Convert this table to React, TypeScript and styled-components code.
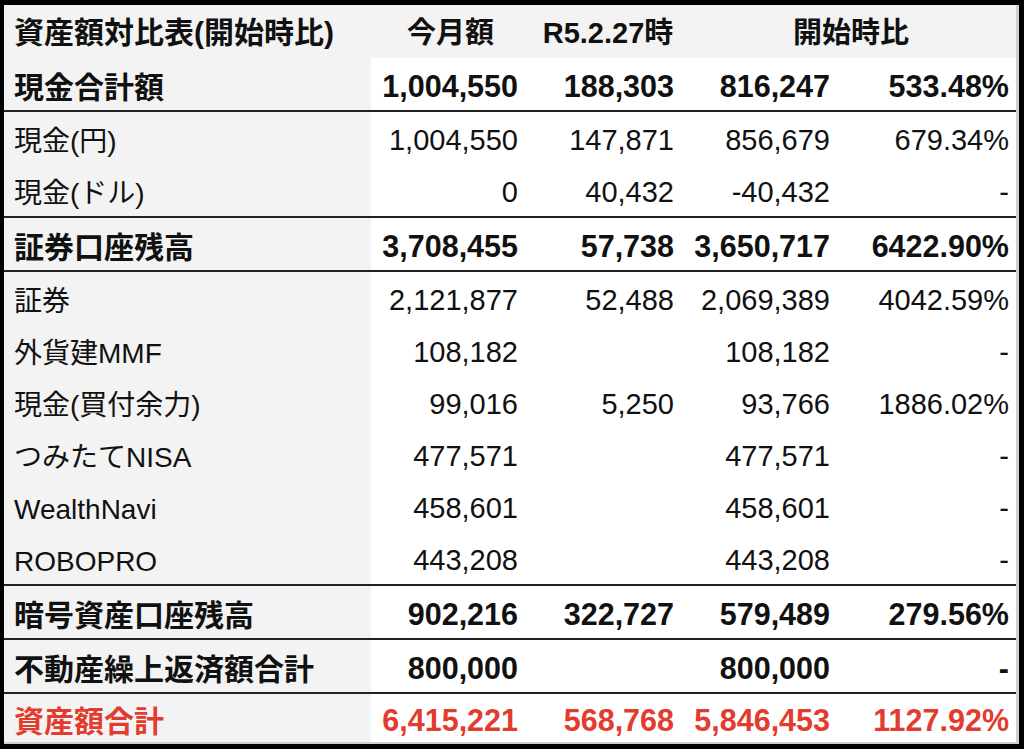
import React from 'react';
import styled, { createGlobalStyle } from 'styled-components';

type Row = {
  label: string;
  values: [string, string, string, string];
  bold?: boolean;
  group?: boolean;
  red?: boolean;
};

const rows: Row[] = [
  { label: '現金合計額', values: ['1,004,550', '188,303', '816,247', '533.48%'], bold: true, group: true },
  { label: '現金(円)', values: ['1,004,550', '147,871', '856,679', '679.34%'] },
  { label: '現金(ドル)', values: ['0', '40,432', '-40,432', '-'], group: true },
  { label: '証券口座残高', values: ['3,708,455', '57,738', '3,650,717', '6422.90%'], bold: true, group: true },
  { label: '証券', values: ['2,121,877', '52,488', '2,069,389', '4042.59%'] },
  { label: '外貨建MMF', values: ['108,182', '', '108,182', '-'] },
  { label: '現金(買付余力)', values: ['99,016', '5,250', '93,766', '1886.02%'] },
  { label: 'つみたてNISA', values: ['477,571', '', '477,571', '-'] },
  { label: 'WealthNavi', values: ['458,601', '', '458,601', '-'] },
  { label: 'ROBOPRO', values: ['443,208', '', '443,208', '-'], group: true },
  { label: '暗号資産口座残高', values: ['902,216', '322,727', '579,489', '279.56%'], bold: true, group: true },
  { label: '不動産繰上返済額合計', values: ['800,000', '', '800,000', '-'], bold: true, group: true },
  { label: '資産額合計', values: ['6,415,221', '568,768', '5,846,453', '1127.92%'], bold: true, red: true },
];

export default function App() {
  return (
    <>
      <GlobalStyle />
      <Frame>
        <Table>
          <HeaderRow>
            <HeaderTitle>資産額対比表(開始時比)</HeaderTitle>
            <HeaderCell>今月額</HeaderCell>
            <HeaderCell>R5.2.27時</HeaderCell>
            <HeaderCell $span={2}>開始時比</HeaderCell>
          </HeaderRow>
          {rows.map((row, i) => (
            <DataRow key={row.label} $group={row.group} $last={i === rows.length - 1}>
              <Label $bold={row.bold} $red={row.red}>
                {row.label}
              </Label>
              {row.values.map((v, j) => (
                <Value key={j} $bold={row.bold} $red={row.red} $pad={j === 3 ? 7 : 12}>
                  {v}
                </Value>
              ))}
            </DataRow>
          ))}
        </Table>
      </Frame>
    </>
  );
}

const GlobalStyle = createGlobalStyle`
  html, body {
    margin: 0;
    background: #000;
  }
  body {
    font-family: "Liberation Sans", "Noto Sans CJK JP", sans-serif;
    color: #111;
  }
`;

const Frame = styled('div')`
  width: 1024px;
  height: 749px;
  box-sizing: border-box;
  padding: 5px 5px 6px 4px;
  background: #000;
`;

const Table = styled('div')`
  display: flex;
  flex-direction: column;
  background: #fff;
  border-right: 3px solid #cfcfcf;
  border-bottom: 2px solid #cfcfcf;
`;

const columns = '367px 159px 156px 156px 1fr';

const HeaderRow = styled('div')`
  display: grid;
  grid-template-columns: ${columns};
  grid-template-rows: 53px;
  background: #f3f3f3;
  font-weight: 700;
  font-size: 29px;
  line-height: 1.2;
`;

const HeaderTitle = styled('div')`
  display: flex;
  align-items: center;
  padding: 3px 0 0 10px;
  font-size: 30px;
  white-space: nowrap;
`;

const HeaderCell = styled('div')<{ $span?: number }>`
  display: flex;
  align-items: center;
  justify-content: center;
  padding-top: 4px;
  grid-column: span ${({ $span }) => $span ?? 1};
`;

const DataRow = styled('div')<{ $group?: boolean; $last?: boolean }>`
  display: grid;
  grid-template-columns: ${columns};
  grid-template-rows: ${({ $last }) => ($last ? 48 : 52)}px;
  border-bottom: ${({ $group }) => ($group ? '2px solid #222' : 'none')};
  line-height: 1.2;
`;

const Label = styled('div')<{ $bold?: boolean; $red?: boolean }>`
  display: flex;
  align-items: center;
  padding: 7px 0 0 10px;
  background: #f3f3f3;
  white-space: nowrap;
  overflow: hidden;
  font-size: ${({ $bold }) => ($bold ? 30 : 28)}px;
  font-weight: ${({ $bold }) => ($bold ? 700 : 400)};
  color: ${({ $red }) => ($red ? '#e23c2e' : '#111')};
`;

const Value = styled('div')<{ $bold?: boolean; $red?: boolean; $pad: number }>`
  display: flex;
  align-items: center;
  justify-content: flex-end;
  padding: 4px ${({ $pad }) => $pad}px 0 0;
  white-space: nowrap;
  overflow: hidden;
  font-size: ${({ $bold }) => ($bold ? 30.5 : 29)}px;
  font-weight: ${({ $bold }) => ($bold ? 700 : 400)};
  color: ${({ $red }) => ($red ? '#e23c2e' : '#111')};
`;
